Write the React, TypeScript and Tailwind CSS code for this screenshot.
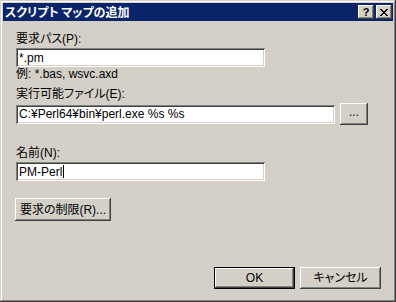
import React from "react"

const font = { fontFamily: '"Liberation Sans", "Noto Sans CJK JP", sans-serif' }

const raised =
  "bg-[#d4d0c8] shadow-[inset_-1px_-1px_0_#404040,inset_1px_1px_0_#ffffff,inset_-2px_-2px_0_#808080]"
const sunken =
  "bg-white shadow-[inset_1px_1px_0_#808080,inset_-1px_-1px_0_#ffffff,inset_2px_2px_0_#404040,inset_-2px_-2px_0_#d4d0c8]"

function Field({ value, width, caret }: { value: string; width: string; caret?: boolean }) {
  return (
    <div className={`flex h-[19px] items-center pl-[3px] text-[12px] leading-none text-black ${sunken} ${width}`}>
      <span className="whitespace-pre">{value}</span>
      {caret && <span className="ml-px h-[13px] w-px bg-black" />}
    </div>
  )
}

function Btn({ children, className, isDefault }: { children: React.ReactNode; className: string; isDefault?: boolean }) {
  if (isDefault) {
    return (
      <div className={`border border-black ${className}`}>
        <div className={`flex h-full w-full items-center justify-center text-[12px] text-black ${raised}`}>{children}</div>
      </div>
    )
  }
  return (
    <div className={`flex items-center justify-center text-[12px] text-black ${raised} ${className}`}>{children}</div>
  )
}

export default function App() {
  return (
    <div
      className="flex h-[302px] w-[396px] flex-col bg-[#d4d0c8] p-[3px] [font-feature-settings:'palt'] shadow-[inset_-1px_-1px_0_#404040,inset_1px_1px_0_#d4d0c8,inset_-2px_-2px_0_#808080,inset_2px_2px_0_#ffffff]"
      style={font}
    >
      {/* Title bar */}
      <div className="flex h-[18px] items-center bg-[#0a246a] pl-[2px] pr-[1px]">
        <span className="flex-1 text-[12px] font-bold leading-none text-white" style={{ fontFamily: '"Noto Sans CJK JP", sans-serif' }}>
          スクリプト マップの追加
        </span>
        <div className={`flex h-[14px] w-[16px] items-center justify-center ${raised}`}>
          <span className="text-[11px] font-bold leading-none text-black">?</span>
        </div>
        <div className={`ml-[2px] flex h-[14px] w-[16px] items-center justify-center ${raised}`}>
          <svg width="8" height="7" viewBox="0 0 8 7" shapeRendering="crispEdges">
            <path d="M0 0h2v1h-2zM6 0h2v1h-2zM1 1h2v1h-2zM5 1h2v1h-2zM2 2h4v1h-4zM3 3h2v1h-2zM2 4h4v1h-4zM1 5h2v1h-2zM5 5h2v1h-2zM0 6h2v1h-2zM6 6h2v1h-2z" fill="#000" />
          </svg>
        </div>
      </div>

      {/* Body */}
      <div className="flex flex-1 flex-col pl-[13px] pr-[12px] pb-[10px] text-[12px] text-black">
        <div className="mt-[11px] h-[14px] leading-[14px]">要求パス(P):</div>
        <div className="mt-[2px]">
          <Field value="*.pm" width="w-[249px]" />
        </div>
        <div className="h-[14px] leading-[14px]">例: *.bas, wsvc.axd</div>

        <div className="mt-[6px] h-[14px] leading-[14px]">実行可能ファイル(E):</div>
        <div className="mt-[2px] flex items-center gap-[5px]">
          <Field value="C:¥Perl64¥bin¥perl.exe %s %s" width="w-[319px]" />
          <Btn className="h-[22px] w-[28px] pb-[4px]">...</Btn>
        </div>

        <div className="mt-[21px] h-[14px] leading-[14px]">名前(N):</div>
        <div className="mt-[2px]">
          <Field value="PM-Perl" width="w-[249px]" caret />
        </div>

        <div className="mt-[17px] -ml-px">
          <Btn className="h-[23px] w-[96px]">要求の制限(R)...</Btn>
        </div>

        <div className="mt-auto flex justify-end gap-[5px]">
          <Btn className="h-[22px] w-[81px]" isDefault>
            OK
          </Btn>
          <Btn className="h-[22px] w-[81px]">キャンセル</Btn>
        </div>
      </div>
    </div>
  )
}
